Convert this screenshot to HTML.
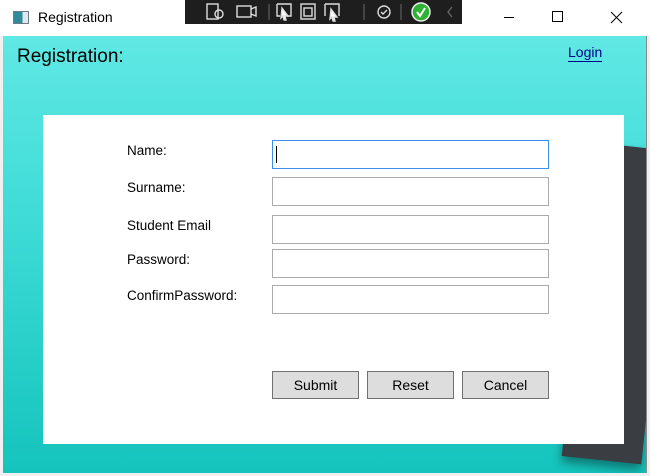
<!DOCTYPE html>
<html><head><style>
*{margin:0;padding:0;box-sizing:border-box}
body{width:650px;height:476px;background:#f0f0f0;position:relative;overflow:hidden;font-family:"Liberation Sans",sans-serif;color:#000}
.a{position:absolute}
.title{left:0;top:0;width:650px;height:36px;background:#fff}
.bg{left:3px;top:36px;width:643px;height:437px;background:linear-gradient(180deg,#60e8e4 0%,#40dcd8 40%,#14c4bc 100%);overflow:hidden}
.card{left:43px;top:115px;width:581px;height:329px;background:#fff}
.lbl{font-size:13.5px;left:127px}
.in{left:272px;width:277px;height:29px;border:1px solid #ababab;background:#fff}
.btn{top:371px;height:28px;border:1px solid #707070;background:#dddddd;font-size:14px;text-align:center;line-height:26px}
</style></head><body>
<div class="a title"></div>
<div class="a" style="left:13px;top:11px;width:16px;height:13px;border:1px solid #6a7a86;background:linear-gradient(90deg,#2f8a9a 0 60%,#dfe8ee 60%)"></div>
<div class="a" style="left:38px;top:9px;font-size:14px">Registration</div>
<div class="a" style="left:185px;top:0;width:277px;height:24px;background:#1e1e1e">
<svg width="277" height="24" style="position:absolute;left:0;top:0" fill="none" stroke="#ddd" stroke-width="1.4">
<rect x="22" y="4" width="11" height="15"/><circle cx="34" cy="14" r="4"/>
<rect x="52" y="6" width="14" height="11"/><path d="M66 9l5-2v9l-5-2"/>
<line x1="84" y1="4" x2="84" y2="20" stroke="#555"/>
<path d="M92 4h14v12h-4M92 4v12h3"/><path d="M97 8l6 8h-3l1 4-2 0-1-4-2 2z" fill="#fff"/>
<rect x="116" y="4" width="14" height="15"/><rect x="119" y="8" width="8" height="8"/>
<path d="M140 4h14v12M140 4v12"/><path d="M146 9l6 8h-3l1 4-2 0-1-4-2 2z" fill="#fff"/>
<line x1="179" y1="4" x2="179" y2="20" stroke="#555"/>
<circle cx="199" cy="12" r="6"/><path d="M196 12l2 2 4-4"/>
<line x1="216" y1="4" x2="216" y2="20" stroke="#555"/>
<circle cx="236" cy="12" r="9" fill="#2fb135" stroke="#eee" stroke-width="1.5"/><path d="M232 12l3 4 5-8" stroke="#fff" stroke-width="2"/>
<path d="M267 7l-4 5 4 5" stroke="#666"/>
</svg></div>
<svg class="a" style="left:0;top:0" width="650" height="36" stroke="#000" stroke-width="1" fill="none">
<line x1="504" y1="17.5" x2="514" y2="17.5"/><rect x="552.5" y="11.5" width="10" height="10"/>
<path d="M611 12l11 11M622 12l-11 11"/></svg>
<div class="a bg">
<div class="a" style="left:575px;top:110px;width:80px;height:315px;background:#3a3d42;transform:rotate(6deg);box-shadow:0 6px 10px rgba(0,0,0,.4)"></div>
</div>
<div class="a" style="left:646px;top:36px;width:1px;height:437px;background:#888"></div>
<div class="a" style="left:17px;top:46px;font-size:19px">Registration:</div>
<div class="a" style="left:568px;top:44px;font-size:14px;color:#00008b;border-bottom:1px solid #00008b;line-height:17px">Login</div>
<div class="a card"></div>
<div class="a lbl" style="top:143px">Name:</div>
<div class="a lbl" style="top:180px">Surname:</div>
<div class="a lbl" style="top:218px">Student Email</div>
<div class="a lbl" style="top:252px">Password:</div>
<div class="a lbl" style="top:288px">ConfirmPassword:</div>
<div class="a in" style="top:140px;border-color:#3c8fe8"><div class="a" style="left:3px;top:5px;width:1px;height:17px;background:#000"></div></div>
<div class="a in" style="top:177px"></div>
<div class="a in" style="top:215px"></div>
<div class="a in" style="top:249px"></div>
<div class="a in" style="top:285px"></div>
<div class="a btn" style="left:272px;width:87px">Submit</div>
<div class="a btn" style="left:367px;width:87px">Reset</div>
<div class="a btn" style="left:462px;width:87px">Cancel</div>
</body></html>
